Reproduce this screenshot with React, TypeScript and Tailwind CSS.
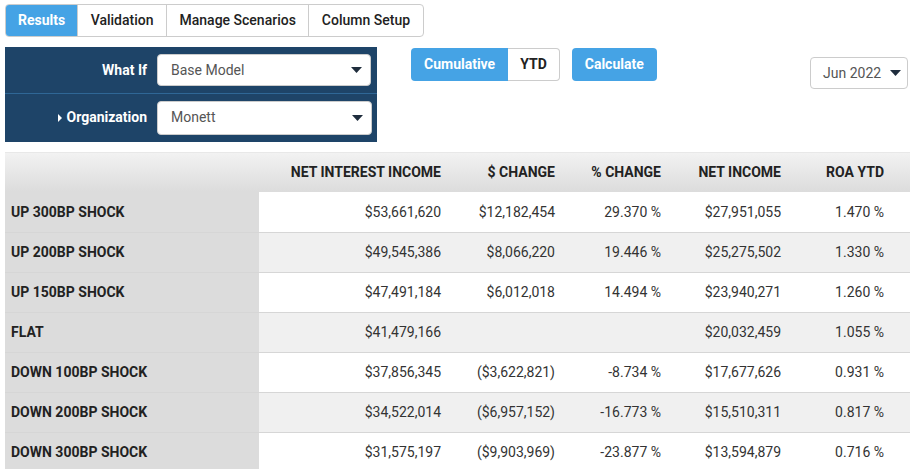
import React from "react";

interface Row {
  label: string;
  nii: string;
  change: string;
  pct: string;
  ni: string;
  roa: string;
}

const rows: Row[] = [
  { label: "UP 300BP SHOCK", nii: "$53,661,620", change: "$12,182,454", pct: "29.370 %", ni: "$27,951,055", roa: "1.470 %" },
  { label: "UP 200BP SHOCK", nii: "$49,545,386", change: "$8,066,220", pct: "19.446 %", ni: "$25,275,502", roa: "1.330 %" },
  { label: "UP 150BP SHOCK", nii: "$47,491,184", change: "$6,012,018", pct: "14.494 %", ni: "$23,940,271", roa: "1.260 %" },
  { label: "FLAT", nii: "$41,479,166", change: "", pct: "", ni: "$20,032,459", roa: "1.055 %" },
  { label: "DOWN 100BP SHOCK", nii: "$37,856,345", change: "($3,622,821)", pct: "-8.734 %", ni: "$17,677,626", roa: "0.931 %" },
  { label: "DOWN 200BP SHOCK", nii: "$34,522,014", change: "($6,957,152)", pct: "-16.773 %", ni: "$15,510,311", roa: "0.817 %" },
  { label: "DOWN 300BP SHOCK", nii: "$31,575,197", change: "($9,903,969)", pct: "-23.877 %", ni: "$13,594,879", roa: "0.716 %" },
];

const tabs = ["Results", "Validation", "Manage Scenarios", "Column Setup"];

const Caret = () => (
  <svg width="11" height="6" viewBox="0 0 11 6" className="shrink-0">
    <path d="M0 0h11L5.5 6z" fill="#1f2d3d" />
  </svg>
);

const Select: React.FC<{ value: string; className?: string }> = ({ value, className }) => (
  <div
    className={`flex items-center justify-between bg-white border border-[#ccc] rounded-[4px] text-[14px] text-[#555] ${className ?? ""}`}
  >
    <span>{value}</span>
    <Caret />
  </div>
);

const gridCols = "grid grid-cols-[254px_188px_114px_106px_120px_1fr]";

const App: React.FC = () => {
  return (
    <div
      className="w-[910px] h-[469px] overflow-hidden bg-white text-[#333]"
      style={{ fontFamily: "Roboto, 'Liberation Sans', sans-serif" }}
    >
      <div className="pl-[5px] pt-[4px]">
        {/* Tabs */}
        <div className="flex h-[33px] w-fit border border-[#ccc] rounded-[4px] overflow-hidden text-[14px]">
          {tabs.map((t, i) => (
            <div
              key={t}
              className={
                i === 0
                  ? "flex items-center px-[12px] bg-[#45a3e5] text-white font-bold"
                  : "flex items-center px-[12.5px] border-l border-[#ccc] text-[#222] font-medium"
              }
            >
              {t}
            </div>
          ))}
        </div>

        {/* Controls */}
        <div className="flex items-start mt-[10px]">
          <div className="w-[372px] h-[95px] bg-[#1e4468] flex flex-col">
            <div className="flex items-center h-[47px] border-b border-[#2f6796]">
              <div className="w-[142px] text-right text-white font-bold text-[14px]">What If</div>
              <Select value="Base Model" className="ml-[10px] w-[214px] h-[32px] pl-[13px] pr-[8px]" />
            </div>
            <div className="flex items-center h-[47px]">
              <div className="w-[142px] flex items-center justify-end text-white font-bold text-[14px]">
                <svg width="4" height="8" viewBox="0 0 4 8" className="mr-[5px]">
                  <path d="M0 0l4 4-4 4z" fill="#fff" />
                </svg>
                Organization
              </div>
              <Select value="Monett" className="ml-[10px] w-[215px] h-[34px] pl-[13px] pr-[8px]" />
            </div>
          </div>

          <div className="flex ml-[34px] mt-[1px] h-[33px] text-[14px] font-bold">
            <div className="flex items-center px-[13px] bg-[#45a3e5] text-white rounded-l-[4px]">Cumulative</div>
            <div className="flex items-center px-[12px] border border-l-0 border-[#ccc] text-[#222] rounded-r-[4px]">YTD</div>
          </div>
          <div className="flex items-center ml-[12px] mt-[1px] h-[33px] px-[13px] bg-[#45a3e5] text-white font-bold text-[14px] rounded-[4px]">
            Calculate
          </div>
          <Select value="Jun 2022" className="ml-auto mr-[2px] mt-[10px] w-[98px] h-[32px] pl-[12px] pr-[6px]" />
        </div>

        {/* Table */}
        <div className="mt-[10px] text-[14px]">
          <div className={`${gridCols} h-[40px] bg-gradient-to-b from-[#f2f2f2] to-[#dcdcdc] font-bold text-[#222] border-t border-[#e8e8e8]`}>
            <div />
            <div className="flex items-center justify-end pr-[6px]">NET INTEREST INCOME</div>
            <div className="flex items-center justify-end pr-[6px]">$ CHANGE</div>
            <div className="flex items-center justify-end pr-[6px]">% CHANGE</div>
            <div className="flex items-center justify-end pr-[6px]">NET INCOME</div>
            <div className="flex items-center justify-end pr-[26px]">ROA YTD</div>
          </div>
          {rows.map((r, i) => (
            <div
              key={r.label}
              className={`${gridCols} h-[40px] ${i % 2 === 0 ? "bg-white" : "bg-[#f0f0f0]"} ${i > 0 ? "border-t border-[#d6d6d6]" : ""}`}
            >
              <div className="flex items-center pl-[6px] bg-[#dcdcdc] font-bold text-[#222]">{r.label}</div>
              <div className="flex items-center justify-end pr-[6px]">{r.nii}</div>
              <div className="flex items-center justify-end pr-[6px]">{r.change}</div>
              <div className="flex items-center justify-end pr-[6px]">{r.pct}</div>
              <div className="flex items-center justify-end pr-[6px]">{r.ni}</div>
              <div className="flex items-center justify-end pr-[26px]">{r.roa}</div>
            </div>
          ))}
        </div>
      </div>
    </div>
  );
};

export default App;
